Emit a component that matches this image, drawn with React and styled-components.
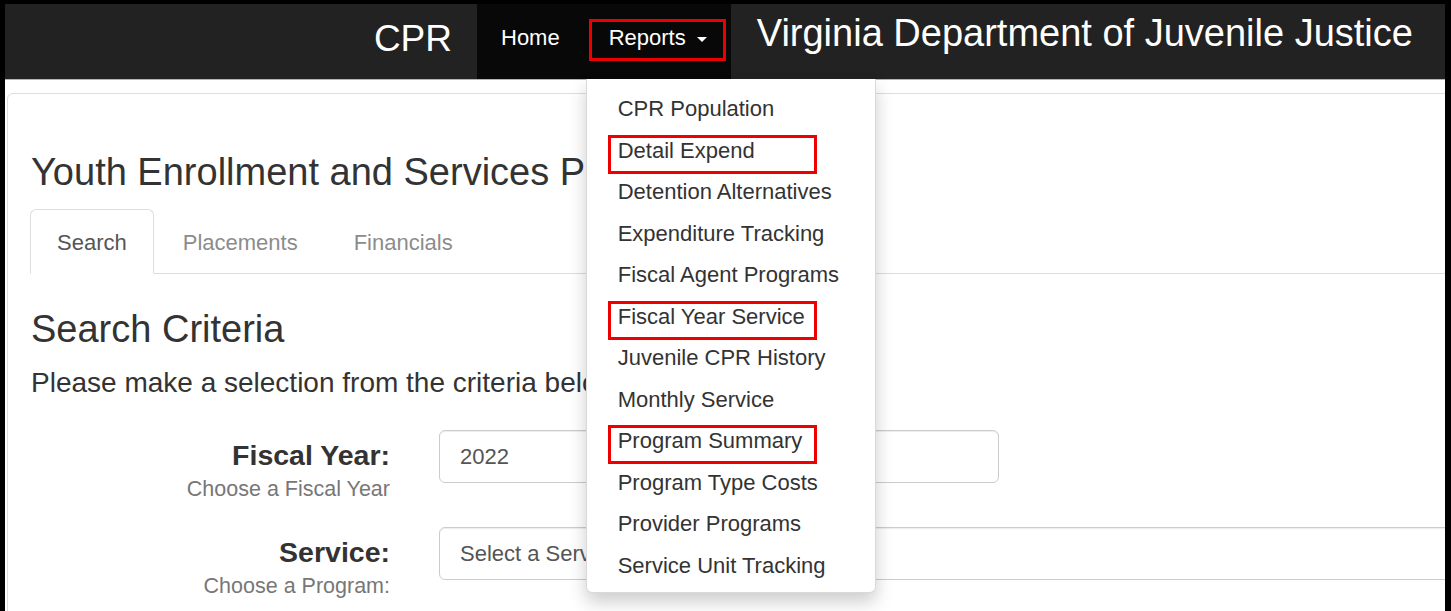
import styled, { createGlobalStyle, css } from "styled-components"

const GlobalStyle = createGlobalStyle`
  html, body {
    margin: 0;
    padding: 0;
    background: #fff;
  }
  body {
    font-family: "Liberation Sans", Arial, sans-serif;
  }
`

const Frame = styled.div`
  width: 1451px;
  height: 611px;
  box-sizing: border-box;
  border-style: solid;
  border-color: #000;
  border-width: 4px 6px 0 5px;
  overflow: hidden;
  background: #fff;
`

const Navbar = styled.header`
  display: flex;
  height: 75px;
  background: #222;
  border-bottom: 1px solid #b4b4b4;
  position: relative;
  z-index: 5;
`

const Brand = styled.div`
  width: 472px;
  box-sizing: border-box;
  padding: 16px 25px 0 0;
  text-align: right;
  font-size: 37px;
  line-height: 37px;
  color: #fff;
`

const NavList = styled.ul`
  display: flex;
  margin: 0;
  padding: 0;
  list-style: none;
  background: #080808;
`

const redBox = css`
  content: "";
  position: absolute;
  box-sizing: border-box;
  border: 3px solid #ee0000;
  pointer-events: none;
`

const NavItem = styled.li`
  position: relative;
  padding: 23px 24px 0 ${(p) => (p.$wide ? 25 : 24)}px;
  font-size: 22px;
  line-height: 22px;
  color: #fff;
  white-space: nowrap;

  ${(p) =>
    p.$marked &&
    css`
      &::after {
        ${redBox}
        top: 15px;
        bottom: 18px;
        left: 5px;
        right: 5px;
      }
    `}
`

const Caret = styled.span`
  display: inline-block;
  margin-left: 11px;
  vertical-align: middle;
  border-top: 5px solid #fff;
  border-left: 5px solid transparent;
  border-right: 5px solid transparent;
`

const SiteTitle = styled.div`
  padding: 10px 0 0 26px;
  font-size: 38px;
  line-height: 38px;
  color: #fff;
  white-space: nowrap;
`

const Menu = styled.ul`
  position: absolute;
  top: 100%;
  left: 2px;
  width: 290px;
  box-sizing: border-box;
  margin: 0;
  padding: 9px 0 6px;
  list-style: none;
  background: #fff;
  border: 1px solid rgba(0, 0, 0, 0.15);
  border-top: 0;
  border-radius: 0 0 6px 6px;
  box-shadow: 0 9px 18px rgba(0, 0, 0, 0.2);
  z-index: 20;
`

const MenuItem = styled.li`
  position: relative;
  height: 41.5px;
  padding: 0 31px;
  font-size: 22px;
  line-height: 41.5px;
  color: #333;
  white-space: nowrap;

  ${(p) =>
    p.$marked &&
    css`
      &::after {
        ${redBox}
        top: 5px;
        left: 21px;
        width: 209px;
        height: 39px;
      }
    `}
`

const Panel = styled.section`
  margin: 13px -40px 0 2px;
  padding: 57px 23px 40px;
  border: 1px solid #ddd;
  border-radius: 6px;
`

const Heading = styled.h3`
  margin: ${(p) => p.$top || 0}px 0 0;
  font-size: 38px;
  line-height: 42px;
  font-weight: 400;
  color: #333;
  white-space: nowrap;
`

const Tabs = styled.ul`
  display: flex;
  margin: 16px 0 0 -1px;
  padding: 0;
  list-style: none;
  border-bottom: 1px solid #ddd;
`

const Tab = styled.li`
  height: 65px;
  box-sizing: border-box;
  margin: 0 2px -1px 0;
  padding: 1px 26px 0;
  font-size: 22px;
  line-height: 63px;
  color: #8c8c8c;
  border: 1px solid transparent;
  border-radius: 6px 6px 0 0;

  ${(p) =>
    p.$active &&
    css`
      color: #555;
      background: #fff;
      border-color: #ddd #ddd transparent;
    `}
`

const Lead = styled.p`
  margin: 17px 0 0;
  font-size: 28px;
  line-height: 31px;
  color: #333;
  white-space: nowrap;
`

const Form = styled.div`
  margin-top: 32px;
`

const FormRow = styled.div`
  display: grid;
  grid-template-columns: 359px 1fr;
  column-gap: 49px;
  align-items: start;

  & + & {
    margin-top: 26px;
  }
`

const LabelCell = styled.div`
  padding-top: 10px;
  text-align: right;
`

const FieldLabel = styled.div`
  font-size: 28.5px;
  line-height: 31px;
  font-weight: 700;
  color: #333;
`

const Hint = styled.div`
  margin-top: 6px;
  font-size: 21.5px;
  line-height: 24px;
  color: #777;
`

const Field = styled.div`
  display: flex;
  align-items: center;
  width: ${(p) => p.$width || "auto"};
  height: 53px;
  box-sizing: border-box;
  padding: 0 20px;
  border: 1px solid #ccc;
  border-radius: 6px;
  box-shadow: inset 0 1px 1px rgba(0, 0, 0, 0.075);
  font-size: 22px;
  color: #555;
  white-space: nowrap;
`

const reports = [
  { name: "CPR Population" },
  { name: "Detail Expend", marked: true },
  { name: "Detention Alternatives" },
  { name: "Expenditure Tracking" },
  { name: "Fiscal Agent Programs" },
  { name: "Fiscal Year Service", marked: true },
  { name: "Juvenile CPR History" },
  { name: "Monthly Service" },
  { name: "Program Summary", marked: true },
  { name: "Program Type Costs" },
  { name: "Provider Programs" },
  { name: "Service Unit Tracking" },
]

const App = () => {
  return (
    <>
      <GlobalStyle />
      <Frame>
        <Navbar>
          <Brand>CPR</Brand>
          <NavList>
            <NavItem>Home</NavItem>
            <NavItem $wide $marked>
              Reports
              <Caret />
              <Menu>
                {reports.map((r) => (
                  <MenuItem key={r.name} $marked={r.marked}>
                    {r.name}
                  </MenuItem>
                ))}
              </Menu>
            </NavItem>
          </NavList>
          <SiteTitle>Virginia Department of Juvenile Justice</SiteTitle>
        </Navbar>

        <Panel>
          <Heading>Youth Enrollment and Services Portal</Heading>
          <Tabs>
            <Tab $active>Search</Tab>
            <Tab>Placements</Tab>
            <Tab>Financials</Tab>
          </Tabs>

          <Heading $top={34}>Search Criteria</Heading>
          <Lead>Please make a selection from the criteria below.</Lead>

          <Form>
            <FormRow>
              <LabelCell>
                <FieldLabel>Fiscal Year:</FieldLabel>
                <Hint>Choose a Fiscal Year</Hint>
              </LabelCell>
              <Field $width="560px">2022</Field>
            </FormRow>
            <FormRow>
              <LabelCell>
                <FieldLabel>Service:</FieldLabel>
                <Hint>Choose a Program:</Hint>
              </LabelCell>
              <Field>Select a Service</Field>
            </FormRow>
          </Form>
        </Panel>
      </Frame>
    </>
  )
}

export default App
